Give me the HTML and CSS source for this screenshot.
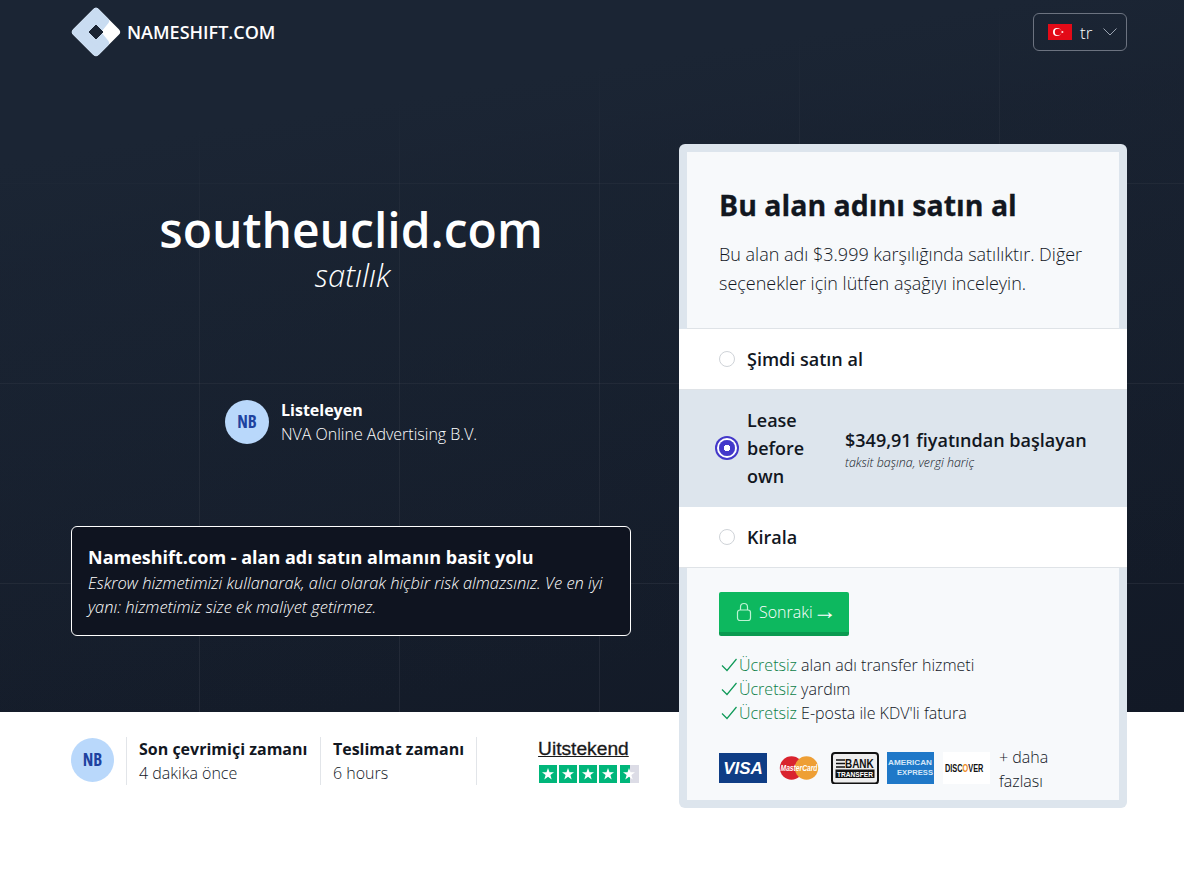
FILE: index.html
```html
<!DOCTYPE html>
<html lang="tr">
<head>
  <meta charset="UTF-8" />
  <meta name="viewport" content="width=device-width, initial-scale=1.0" />
  <title>southeuclid.com satılık</title>
  <link rel="stylesheet" href="styles.css">
</head>
<body>
  <div class="hero">
    <header class="topbar">
      <a class="logo" href="#">
        <svg class="logo-mark" viewBox="0 0 50 50" width="50" height="50">
          <path d="M25 5 L45 25 L25 45 L5 25 Z" fill="#fff" stroke="#fff" stroke-width="8" stroke-linejoin="round"/>
          <path d="M25 5 L34 14 L25 25 L34 36 L25 45 L5 25 Z" fill="#c9dcf1" stroke="#c9dcf1" stroke-width="8" stroke-linejoin="round"/>
          <path d="M25 18 L32 25 L25 32 L18 25 Z" fill="#1a2433" stroke="#1a2433" stroke-width="1" stroke-linejoin="round"/>
        </svg>
        <span>NAMESHIFT.COM</span>
      </a>
      <button class="lang">
        <svg viewBox="0 0 24 16" width="24" height="16">
          <rect width="24" height="16" fill="#e30a17"/>
          <circle cx="9" cy="8" r="4" fill="#fff"/>
          <circle cx="10" cy="8" r="3.2" fill="#e30a17"/>
          <polygon points="12.6,8 15.6,7 13.8,9.6 13.8,6.4 15.6,9" fill="#fff"/>
        </svg>
        <span>tr</span>
        <svg viewBox="0 0 14 8" width="14" height="8">
          <path d="M0.5 0.5 L7 7 L13.5 0.5" fill="none" stroke="#9aa3b0" stroke-width="1"/>
        </svg>
      </button>
    </header>

    <div class="hero-main">
      <div class="intro">
        <h1>southeuclid.com</h1>
        <p class="forsale">satılık</p>

        <div class="seller">
          <div class="avatar">NB</div>
          <div>
            <strong>Listeleyen</strong>
            <div class="light">NVA Online Advertising B.V.</div>
          </div>
        </div>

        <div class="infobox">
          <strong>Nameshift.com - alan adı satın almanın basit yolu</strong>
          <p>Eskrow hizmetimizi kullanarak, alıcı olarak hiçbir risk almazsınız. Ve en iyi yanı: hizmetimiz size ek maliyet getirmez.</p>
        </div>
      </div>

      <form class="card">
        <div class="card-head">
          <h2>Bu alan adını satın al</h2>
          <p>Bu alan adı $3.999 karşılığında satılıktır. Diğer seçenekler için lütfen aşağıyı inceleyin.</p>
        </div>

        <label class="option">
          <input type="radio" name="plan" />
          <span class="opt-name">Şimdi satın al</span>
        </label>
        <label class="option selected">
          <input type="radio" name="plan" checked />
          <span class="opt-name narrow">Lease before own</span>
          <span class="opt-price">
            <b>$349,91 fiyatından başlayan</b>
            <small>taksit başına, vergi hariç</small>
          </span>
        </label>
        <label class="option">
          <input type="radio" name="plan" />
          <span class="opt-name">Kirala</span>
        </label>

        <div class="card-foot">
          <button class="next" type="button">
            <svg viewBox="0 0 16 20" width="16" height="20">
              <rect x="1.5" y="8" width="13" height="10.5" rx="2.5" fill="none" stroke="#bdf3d3" stroke-width="1.2"/>
              <path d="M4.5 8 V5 a3.5 3.5 0 0 1 7 0 V8" fill="none" stroke="#bdf3d3" stroke-width="1.2"/>
            </svg>
            <span>Sonraki</span><span class="arrow">→</span>
          </button>

          <ul class="perks">
            <li><svg viewBox="0 0 16 14" width="16" height="14"><path d="M1 7.5 L6 12.5 L15.5 1" fill="none" stroke="#0f9a58" stroke-width="1.2"/></svg><em>Ücretsiz</em> alan adı transfer hizmeti</li>
            <li><svg viewBox="0 0 16 14" width="16" height="14"><path d="M1 7.5 L6 12.5 L15.5 1" fill="none" stroke="#0f9a58" stroke-width="1.2"/></svg><em>Ücretsiz</em> yardım</li>
            <li><svg viewBox="0 0 16 14" width="16" height="14"><path d="M1 7.5 L6 12.5 L15.5 1" fill="none" stroke="#0f9a58" stroke-width="1.2"/></svg><em>Ücretsiz</em> E-posta ile KDV'li fatura</li>
          </ul>

          <div class="payments">
            <svg viewBox="0 0 48 32" width="48" height="32">
              <rect y="1" width="48" height="30" fill="#0f3d85"/>
              <text x="24" y="22" text-anchor="middle" class="pay-visa">VISA</text>
            </svg>
            <svg viewBox="0 0 48 32" width="48" height="32">
              <circle cx="16.5" cy="16" r="11.7" fill="#d9232e"/>
              <circle cx="31.5" cy="16" r="11.7" fill="#ee9f35"/>
              <text transform="translate(24 19) scale(0.84 1.1)" text-anchor="middle" class="pay-mc">MasterCard</text>
            </svg>
            <svg viewBox="0 0 48 32" width="48" height="32">
              <rect x="1" y="1" width="46" height="30.5" rx="3" fill="#eee" stroke="#111" stroke-width="2"/>
              <path d="M5 8 H14 M5 11.5 H14 M5 15 H14" stroke="#111" stroke-width="1.6"/>
              <text transform="translate(14 16) scale(0.83 1)" class="pay-bank">BANK</text>
              <rect x="4.5" y="17.5" width="39" height="8.5" fill="#111"/>
              <text transform="translate(24 24.5) scale(0.88 1)" text-anchor="middle" class="pay-transfer">TRANSFER</text>
            </svg>
            <svg viewBox="0 0 48 32" width="48" height="32">
              <rect width="47" height="32" fill="#1f78c8"/>
              <text x="1" y="13" textLength="44" lengthAdjust="spacingAndGlyphs" class="pay-amex">AMERICAN</text>
              <text x="10" y="22.5" textLength="36" lengthAdjust="spacingAndGlyphs" class="pay-amex">EXPRESS</text>
            </svg>
            <svg viewBox="0 0 48 32" width="48" height="32">
              <rect width="47" height="32" fill="#fff"/>
              <text transform="translate(2 20) scale(0.92 1.35)" class="pay-disc">DISC<tspan fill="#ee8a23">O</tspan>VER</text>
            </svg>
            <span class="more">+ daha fazlası</span>
          </div>
        </div>
      </form>
    </div>
  </div>

  <div class="strip">
    <div class="avatar small">NB</div>
    <div class="stat">
      <strong>Son çevrimiçi zamanı</strong>
      <div class="light">4 dakika önce</div>
    </div>
    <div class="stat">
      <strong>Teslimat zamanı</strong>
      <div class="light">6 hours</div>
    </div>
    <div class="rating">
      <a href="#">Uitstekend</a>
      <svg viewBox="0 0 100 18" width="100" height="18">
        <rect width="18" height="18" fill="#00b67a"/>
        <rect x="20" width="18" height="18" fill="#00b67a"/>
        <rect x="40" width="18" height="18" fill="#00b67a"/>
        <rect x="60" width="18" height="18" fill="#00b67a"/>
        <rect x="81" width="19" height="18" fill="#dcdce6"/>
        <rect x="81" width="10" height="18" fill="#00b67a"/>
        <g fill="#fff">
          <polygon id="star" points="9,3 10.5,7.3 15,7.3 11.4,10 12.7,14.5 9,11.8 5.3,14.5 6.6,10 3,7.3 7.5,7.3"/>
          <use href="#star" x="20"/>
          <use href="#star" x="40"/>
          <use href="#star" x="60"/>
          <use href="#star" x="81"/>
        </g>
      </svg>
    </div>
  </div>
</body>
</html>
```

FILE: styles.css
```css
* {
  box-sizing: border-box;
}
body {
  font-family: "Open Sans", sans-serif;
  font-size: 16px;
  line-height: 24px;
  color: #12171f;
  background: #fff;
  margin: 0;
  min-height: 872px;
}
h1, h2, p, ul {
  margin: 0;
  padding: 0;
}
.light {
  font-weight: 300;
}

/* dark top part, the grid fades out towards the top */
.hero {
  height: 712px;
  padding: 0 57px 0 71px;
  background-color: #161e2c;
  background-image:
    linear-gradient(171deg, #1b2534 18%, rgba(27, 37, 52, 0.45) 30%, rgba(27, 37, 52, 0) 85%),
    linear-gradient(to right, transparent 199px, rgba(255, 255, 255, 0.06) 199px),
    linear-gradient(to bottom, transparent 199px, rgba(255, 255, 255, 0.06) 199px),
    linear-gradient(165deg, #1b2534, #121926);
  background-size: 100% 100%, 200px 200px, 200px 200px, 100% 100%;
  background-position: 0 0, 0 -16px, 0 -16px, 0 0;
}
.topbar {
  height: 64px;
  display: flex;
  align-items: center;
  justify-content: space-between;
}
.logo {
  display: flex;
  align-items: center;
  gap: 6px;
  color: #fff;
  font-size: 18px;
  font-weight: 600;
  text-decoration: none;
}
.lang {
  width: 94px;
  height: 38px;
  display: flex;
  align-items: center;
  padding: 0 9px 0 14px;
  background: none;
  border: 1px solid #6c7380;
  border-radius: 6px;
  color: #fff;
  font: 300 17px "Open Sans", sans-serif;
}
.lang span {
  margin: 0 auto 0 8px;
}

.hero-main {
  display: flex;
  gap: 48px;
  margin-top: 80px;
}
.intro {
  width: 560px;
  padding-top: 58px;
  color: #fff;
}
h1 {
  font-size: 48px;
  line-height: 56px;
  font-weight: 600;
  text-align: center;
}
.forsale {
  padding-left: 3px;
  font-size: 31px;
  line-height: 34px;
  font-weight: 300;
  font-style: italic;
  text-align: center;
}
.seller {
  display: flex;
  align-items: center;
  gap: 12px;
  margin: 106px 0 0 154px;
}
.avatar {
  width: 44px;
  height: 44px;
  flex: none;
  display: flex;
  align-items: center;
  justify-content: center;
  border-radius: 50%;
  background: #b9d8fb;
  color: #1e429f;
  font-weight: 700;
  font-size: 17px;
  font-stretch: 75%;
}
.infobox {
  margin-top: 80px;
  padding: 18px 16px 16px;
  background: #0f1420;
  border: 1px solid #fff;
  border-radius: 6px;
}
.infobox strong {
  display: block;
  font-size: 18px;
  margin-bottom: 2px;
}
.infobox p {
  font-size: 16.45px;
  font-weight: 300;
  font-style: italic;
}

/* order card, it hangs out of the hero */
.card {
  width: 448px;
  height: 664px;
  background: #dde5ed;
  border-radius: 6px;
  padding-top: 8px;
}
.card-head {
  margin: 0 8px;
  padding: 33px 32px 30.4px;
  background: #f7f9fb;
  border-bottom: 1px solid #dfe3e7;
}
.card-head h2 {
  font-size: 28.5px;
  line-height: 40px;
  font-weight: 700;
  -webkit-text-stroke: 0.3px #12171f;
}
.card-head p {
  margin-top: 15px;
  font-size: 18px;
  line-height: 28.8px;
  font-weight: 300;
}
.option {
  display: flex;
  align-items: center;
  gap: 12px;
  padding: 16px 40px;
  background: #fff;
  font-size: 18px;
  line-height: 28px;
  font-weight: 600;
  border-bottom: 1px solid #dfe3e7;
}
.option input {
  appearance: none;
  width: 16px;
  height: 16px;
  margin: 0;
  flex: none;
  border: 1px solid #cfd3d8;
  border-radius: 50%;
  background: #fff;
}
.option input:checked {
  border: 0;
  background: radial-gradient(circle, #fff 3px, #4338ca 3.5px);
  box-shadow: 0 0 0 2px #fff, 0 0 0 4px #4338ca;
}
.selected {
  background: #dde5ed;
  border-bottom-color: #dde5ed;
}
.narrow {
  width: 86px;
}
.opt-price {
  padding-top: 2px;
}
.opt-price b {
  display: block;
  font-weight: 600;
}
.opt-price small {
  display: block;
  font-size: 12.4px;
  line-height: 17px;
  font-weight: 300;
  font-style: italic;
}
.card-foot {
  margin: 0 8px;
  padding: 24px 40px 0 32px;
  background: #f7f9fb;
  height: 232px;
}
.next {
  width: 130px;
  height: 44px;
  display: flex;
  align-items: center;
  padding: 0 0 0 17px;
  gap: 7px;
  background: #0db85f;
  border: 0;
  border-bottom: 4px solid #0a9a50;
  border-radius: 2px;
  color: #fff;
  font: 300 16px "Open Sans", sans-serif;
}
.arrow {
  margin: -3px 0 0 -7px;
  font-size: 24px;
  line-height: 16px;
}
.perks {
  list-style: none;
  margin-top: 17px;
  font-weight: 300;
}
.perks li {
  display: flex;
  align-items: center;
  white-space: pre-wrap;
}
.perks svg {
  margin: 0 2px 0 2px;
}
.perks em {
  font-style: normal;
  color: #0c8048;
}
.payments {
  display: flex;
  align-items: center;
  gap: 8px;
  margin-top: 20px;
}
.payments svg {
  margin-top: -2px;
}
.more {
  font-weight: 300;
  flex: 1;
}
.pay-visa {
  font: italic 700 17px "Liberation Sans", sans-serif;
  fill: #fff;
}
.pay-mc {
  font: italic 700 8px "Liberation Sans", sans-serif;
  fill: #fff;
}
.pay-bank {
  font: 700 12px "Liberation Sans", sans-serif;
  fill: #111;
}
.pay-transfer {
  font: 700 7.5px "Liberation Sans", sans-serif;
  fill: #fff;
}
.pay-amex {
  font: 700 7.5px "Liberation Sans", sans-serif;
  fill: #d5e7f8;
}
.pay-disc {
  font: 700 8px "Liberation Sans", sans-serif;
  fill: #111;
}

/* white strip under the hero */
.strip {
  margin-left: 71px;
  padding-top: 25px;
  display: flex;
  align-items: flex-start;
}
.avatar.small {
  width: 43px;
  height: 44px;
  margin: 1px 12px 0 0;
}
.stat {
  flex: none;
  padding: 0 12px;
  height: 48px;
  border-left: 1px solid #e2e5e9;
  white-space: nowrap;
}
.stat:nth-child(2) {
  padding-right: 13px;
}
.stat:nth-child(3) {
  padding-left: 11.5px;
  border-right: 1px solid #e2e5e9;
}
.stat strong {
  display: block;
  font-weight: 700;
}
.rating {
  margin-left: 61px;
}
.rating a {
  display: block;
  font: 19.2px/24px "Liberation Sans", sans-serif;
  -webkit-text-stroke: 0.3px #1a1a1a;
  color: #1a1a1a;
  text-decoration: underline;
}
.rating svg {
  display: block;
  margin: 4px 0 0 1px;
}
```
